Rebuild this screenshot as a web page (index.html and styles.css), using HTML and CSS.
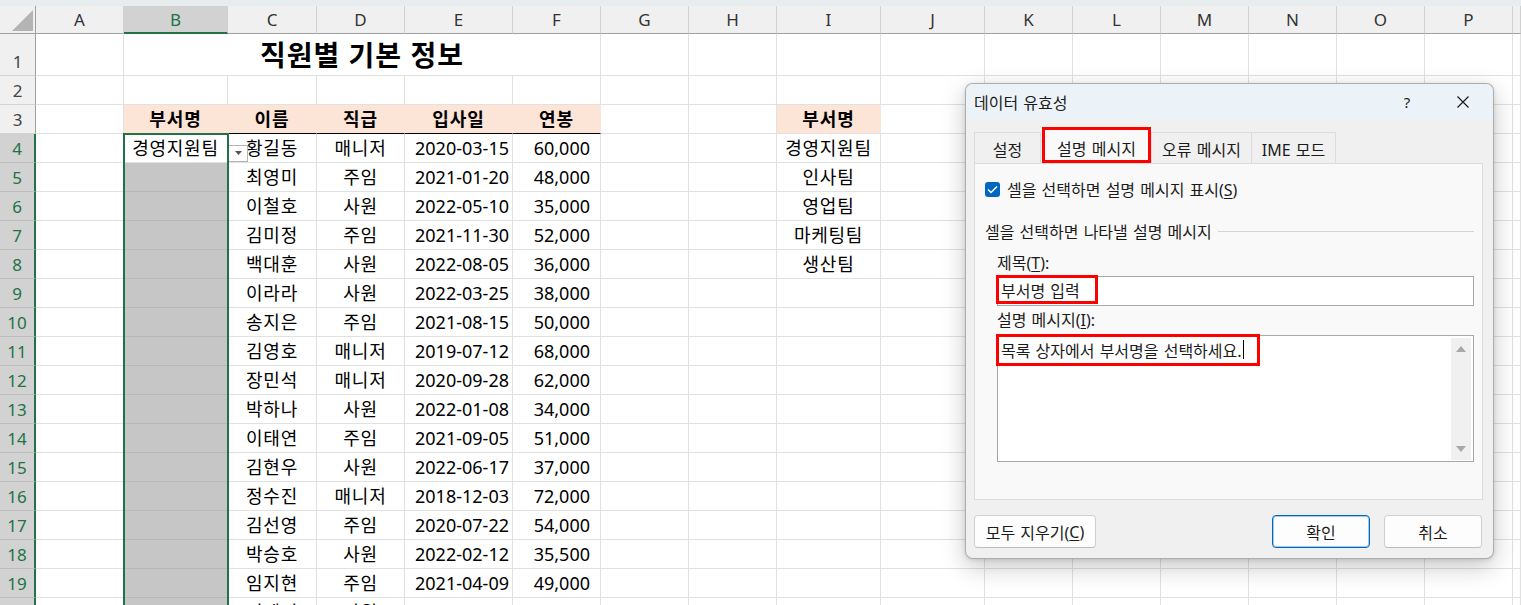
FILE: index.html
```html
<!DOCTYPE html>
<html lang="ko">
<head>
<meta charset="utf-8">
<title>데이터 유효성</title>
<link rel="stylesheet" href="styles.css">
</head>
<body>
<div class="app">
  <div class="strip"></div>
  <div class="sheet">
    <div class="r hd"><div class="corner"><svg width="21" height="21" viewBox="0 0 21 21"><path d="M21 0V21H0Z" fill="#b4b4b4"/></svg></div><div>A</div><div class="on">B</div><div>C</div><div>D</div><div>E</div><div>F</div><div>G</div><div>H</div><div>I</div><div>J</div><div>K</div><div>L</div><div>M</div><div>N</div><div>O</div><div>P</div><div></div></div>
    <div class="r r1"><div class="h">1</div><div></div><div class="title">직원별 기본 정보</div><div></div><div></div><div></div><div></div><div></div><div></div><div></div><div></div><div></div><div></div><div></div></div>
    <div class="r"><div class="h">2</div><div></div><div></div><div></div><div></div><div></div><div></div><div></div><div></div><div></div><div></div><div></div><div></div><div></div><div></div><div></div><div></div><div></div></div>
    <div class="r"><div class="h">3</div><div></div><div class="pk">부서명</div><div class="pk bb">이름</div><div class="pk bb">직급</div><div class="pk bb">입사일</div><div class="pk bb">연봉</div><div></div><div></div><div class="pk">부서명</div><div></div><div></div><div></div><div></div><div></div><div></div><div></div><div></div></div>
    <div class="r"><div class="h s">4</div><div></div><div class="act">경영지원팀</div><div>황길동</div><div>매니저</div><div class="rt">2020-03-15</div><div class="num">60,000</div><div></div><div></div><div>경영지원팀</div><div></div><div></div><div></div><div></div><div></div><div></div><div></div><div></div></div>
    <div class="r"><div class="h s">5</div><div></div><div class="sel"></div><div>최영미</div><div>주임</div><div class="rt">2021-01-20</div><div class="num">48,000</div><div></div><div></div><div>인사팀</div><div></div><div></div><div></div><div></div><div></div><div></div><div></div><div></div></div>
    <div class="r"><div class="h s">6</div><div></div><div class="sel"></div><div>이철호</div><div>사원</div><div class="rt">2022-05-10</div><div class="num">35,000</div><div></div><div></div><div>영업팀</div><div></div><div></div><div></div><div></div><div></div><div></div><div></div><div></div></div>
    <div class="r"><div class="h s">7</div><div></div><div class="sel"></div><div>김미정</div><div>주임</div><div class="rt">2021-11-30</div><div class="num">52,000</div><div></div><div></div><div>마케팅팀</div><div></div><div></div><div></div><div></div><div></div><div></div><div></div><div></div></div>
    <div class="r"><div class="h s">8</div><div></div><div class="sel"></div><div>백대훈</div><div>사원</div><div class="rt">2022-08-05</div><div class="num">36,000</div><div></div><div></div><div>생산팀</div><div></div><div></div><div></div><div></div><div></div><div></div><div></div><div></div></div>
    <div class="r"><div class="h s">9</div><div></div><div class="sel"></div><div>이라라</div><div>사원</div><div class="rt">2022-03-25</div><div class="num">38,000</div><div></div><div></div><div></div><div></div><div></div><div></div><div></div><div></div><div></div><div></div><div></div></div>
    <div class="r"><div class="h s">10</div><div></div><div class="sel"></div><div>송지은</div><div>주임</div><div class="rt">2021-08-15</div><div class="num">50,000</div><div></div><div></div><div></div><div></div><div></div><div></div><div></div><div></div><div></div><div></div><div></div></div>
    <div class="r"><div class="h s">11</div><div></div><div class="sel"></div><div>김영호</div><div>매니저</div><div class="rt">2019-07-12</div><div class="num">68,000</div><div></div><div></div><div></div><div></div><div></div><div></div><div></div><div></div><div></div><div></div><div></div></div>
    <div class="r"><div class="h s">12</div><div></div><div class="sel"></div><div>장민석</div><div>매니저</div><div class="rt">2020-09-28</div><div class="num">62,000</div><div></div><div></div><div></div><div></div><div></div><div></div><div></div><div></div><div></div><div></div><div></div></div>
    <div class="r"><div class="h s">13</div><div></div><div class="sel"></div><div>박하나</div><div>사원</div><div class="rt">2022-01-08</div><div class="num">34,000</div><div></div><div></div><div></div><div></div><div></div><div></div><div></div><div></div><div></div><div></div><div></div></div>
    <div class="r"><div class="h s">14</div><div></div><div class="sel"></div><div>이태연</div><div>주임</div><div class="rt">2021-09-05</div><div class="num">51,000</div><div></div><div></div><div></div><div></div><div></div><div></div><div></div><div></div><div></div><div></div><div></div></div>
    <div class="r"><div class="h s">15</div><div></div><div class="sel"></div><div>김현우</div><div>사원</div><div class="rt">2022-06-17</div><div class="num">37,000</div><div></div><div></div><div></div><div></div><div></div><div></div><div></div><div></div><div></div><div></div><div></div></div>
    <div class="r"><div class="h s">16</div><div></div><div class="sel"></div><div>정수진</div><div>매니저</div><div class="rt">2018-12-03</div><div class="num">72,000</div><div></div><div></div><div></div><div></div><div></div><div></div><div></div><div></div><div></div><div></div><div></div></div>
    <div class="r"><div class="h s">17</div><div></div><div class="sel"></div><div>김선영</div><div>주임</div><div class="rt">2020-07-22</div><div class="num">54,000</div><div></div><div></div><div></div><div></div><div></div><div></div><div></div><div></div><div></div><div></div><div></div></div>
    <div class="r"><div class="h s">18</div><div></div><div class="sel"></div><div>박승호</div><div>사원</div><div class="rt">2022-02-12</div><div class="num">35,500</div><div></div><div></div><div></div><div></div><div></div><div></div><div></div><div></div><div></div><div></div><div></div></div>
    <div class="r"><div class="h s">19</div><div></div><div class="sel"></div><div>임지현</div><div>주임</div><div class="rt">2021-04-09</div><div class="num">49,000</div><div></div><div></div><div></div><div></div><div></div><div></div><div></div><div></div><div></div><div></div><div></div></div>
    <div class="r"><div class="h s">20</div><div></div><div class="sel"></div><div>이세진</div><div>사원</div><div class="rt">2022-07-19</div><div class="num">36,500</div><div></div><div></div><div></div><div></div><div></div><div></div><div></div><div></div><div></div><div></div><div></div></div>
  </div>

  <div class="selbox"></div>
  <div class="dd"><svg width="7" height="4" viewBox="0 0 7 4"><path d="M0 0H7L3.5 4Z" fill="#555"/></svg></div>

  <div class="dlg">
    <div class="dlg-title">
      <span class="t">데이터 유효성</span>
      <span class="q">?</span>
      <span class="x"><svg width="12" height="12" viewBox="0 0 12 12"><path d="M0.5 0.5L11.5 11.5M11.5 0.5L0.5 11.5" stroke="#1b1b1b" stroke-width="1.2" fill="none"/></svg></span>
    </div>
    <div class="dlg-body">
      <div class="tabs">
        <div class="tab t1">설정</div>
        <div class="tab on">설명 메시지</div>
        <div class="tab t3">오류 메시지</div>
        <div class="tab t4">IME 모드</div>
      </div>
      <div class="panel">
        <div class="chk"><span class="box"><svg width="11" height="9" viewBox="0 0 11 9"><path d="M1 4.5L4 7.5L10 1.5" stroke="#fff" stroke-width="1.5" fill="none"/></svg></span><span>셀을 선택하면 설명 메시지 표시(<u>S</u>)</span></div>
        <div class="grp"><span>셀을 선택하면 나타낼 설명 메시지</span><i class="rule"></i></div>
        <div class="fld">
          <div class="lbl">제목(<u>T</u>):</div>
          <div class="inp"><span class="hl hl1">부서명 입력</span></div>
          <div class="lbl lbl2">설명 메시지(<u>I</u>):</div>
          <div class="ta">
            <span class="hl hl2">목록 상자에서 부서명을 선택하세요.<b class="caret"></b></span>
            <div class="sb">
              <svg width="10" height="6" viewBox="0 0 10 6"><path d="M5 0L10 6H0Z" fill="#a8a8a8"/></svg>
              <svg width="10" height="6" viewBox="0 0 10 6"><path d="M0 0H10L5 6Z" fill="#a8a8a8"/></svg>
            </div>
          </div>
        </div>
      </div>
      <div class="btns">
        <div class="btn clr">모두 지우기(<u>C</u>)</div>
        <div class="btn ok">확인</div>
        <div class="btn cancel">취소</div>
      </div>
    </div>
  </div>
</div>
</body>
</html>
```
FILE: styles.css
```css
:root {
  --cols: 36px 88px 104px 89px 88px 108px 88px 88px 88px 104px 104px 88px 88px 88px 88px 88px 88px 8px;
  --grid: #e1e1e1;
  --green: #217346;
}

body {
  margin: 0;
  background: #fff;
  font-family: "Noto Sans", "Noto Sans CJK KR", sans-serif;
}

.app {
  position: relative;
  width: 1521px;
  height: 605px;
  overflow: hidden;
}

.strip {
  height: 6px;
  background: #e7ecef;
}

.r {
  display: grid;
  grid-template-columns: var(--cols);
  height: 29px;
}

.r > div {
  box-sizing: border-box;
  border-right: 1px solid var(--grid);
  border-bottom: 1px solid var(--grid);
  display: flex;
  align-items: center;
  justify-content: center;
  font-size: 18px;
  letter-spacing: 0.7px;
  line-height: 1;
  white-space: nowrap;
  color: #000;
  min-width: 0;
}

.r.hd { height: 28px; }

.r.hd > div {
  background: #f0f0f0;
  border-right-color: #d0d0d0;
  border-bottom-color: #a0a0a0;
  font-size: 17px;
  letter-spacing: 0;
  color: #333;
}

.r.hd > .on {
  background: #d2d2d2;
  color: var(--green);
  border-bottom: 2px solid var(--green);
}

.r.hd > .corner {
  justify-content: flex-end;
  align-items: flex-end;
  padding: 0 2px 2px 0;
  border-right-color: #a0a0a0;
}

.r > .h {
  background: #f0f0f0;
  border-right-color: #a0a0a0;
  border-bottom-color: #d4d4d4;
  font-size: 17px;
  letter-spacing: 0;
  color: #444;
  align-items: flex-end;
  padding-bottom: 5px;
}

.r > .h.s {
  background: #d2d2d2;
  color: var(--green);
  border-right: 2px solid var(--green);
  border-bottom-color: #bdbdbd;
}

.r1 { height: 42px; }

.r > .title {
  grid-column: span 5;
  font-size: 28px;
  letter-spacing: 1px;
  font-weight: 700;
}

.r > .pk {
  background: #fce4d6;
  border-right-color: #fce4d6;
  font-weight: 700;
  letter-spacing: 1px;
}

.r > .bb { border-bottom-color: #000; }

.r > .sel {
  background: #c6c6c6;
  border-bottom-color: #b9b9b9;
  border-right-color: #c6c6c6;
}

.r > .rt {
  justify-content: flex-end;
  padding-right: 3px;
  letter-spacing: 0;
}

.r > .num {
  justify-content: flex-end;
  padding-right: 10px;
  letter-spacing: 0;
}

/* selection outline over column B */
.selbox {
  position: absolute;
  left: 123px;
  top: 133px;
  width: 106px;
  height: 500px;
  box-sizing: border-box;
  border: 2px solid var(--green);
  pointer-events: none;
}

/* data validation dropdown arrow button */
.dd {
  position: absolute;
  left: 229px;
  top: 145px;
  width: 19px;
  height: 17px;
  box-sizing: border-box;
  background: #fff;
  border: 1px solid #b5b5b5;
  border-left: none;
  display: flex;
  justify-content: center;
  align-items: flex-start;
  padding-top: 5px;
}

/* dialog */
.dlg {
  position: absolute;
  left: 965px;
  top: 83px;
  width: 529px;
  height: 476px;
  box-sizing: border-box;
  border: 1px solid rgba(0, 0, 0, 0.28);
  border-radius: 8px;
  background: #f0f0f0;
  box-shadow: 0 8px 24px rgba(0, 0, 0, 0.22), 0 1px 4px rgba(0, 0, 0, 0.12);
  overflow: hidden;
  font-family: "Noto Sans", "Noto Sans CJK KR", sans-serif;
  font-size: 16px;
  word-spacing: 1px;
  color: #1b1b1b;
  display: flex;
  flex-direction: column;
}

.dlg u { text-underline-offset: 2px; }

.dlg-title {
  height: 36px;
  flex: none;
  background: #ebf3f8;
  display: flex;
  align-items: center;
  padding-left: 8px;
}

.dlg-title .t { flex: 1; }

.dlg-title .q {
  width: 20px;
  text-align: center;
  margin-right: 36px;
  font-size: 15px;
}

.dlg-title .x {
  width: 20px;
  margin-right: 20px;
  display: flex;
  justify-content: center;
}

.dlg-body {
  flex: 1;
  padding: 7px 10px 0 8px;
  display: flex;
  flex-direction: column;
}

.tabs {
  display: flex;
  align-items: flex-end;
  height: 36px;
}

.tab {
  height: 31px;
  box-sizing: border-box;
  border: 1px solid #dcdcdc;
  border-bottom: none;
  background: #f0f0f0;
  display: flex;
  align-items: center;
  justify-content: center;
  padding-top: 2px;
}

.tab.t1 { width: 67px; }
.tab.t3 { width: 101px; }
.tab.t4 { width: 84px; border-left: none; }

.tab.on {
  width: 109px;
  height: 36px;
  margin-left: 1px;
  border: 3px solid #ff0000;
  background: #f9f9f9;
  padding-top: 6px;
}

.panel {
  height: 337px;
  box-sizing: border-box;
  border: 1px solid #dcdcdc;
  background: #f9f9f9;
  padding: 15px 8px 0 10px;
}

.chk {
  display: flex;
  align-items: center;
  height: 20px;
  gap: 7px;
}

.chk .box {
  width: 15px;
  height: 15px;
  border-radius: 3px;
  background: #0067c0;
  display: flex;
  align-items: center;
  justify-content: center;
}

.grp {
  display: flex;
  align-items: center;
  height: 20px;
  margin-top: 22px;
  gap: 6px;
}

.grp .rule {
  flex: 1;
  border-top: 1px solid #d5d5d5;
}

.fld { margin-left: 12px; }

.lbl {
  height: 20px;
  line-height: 20px;
  margin-top: 12px;
}

.lbl2 { margin-top: 4px; }

.inp {
  margin-top: 3px;
  height: 30px;
  box-sizing: border-box;
  border: 1px solid #a8a8a8;
  background: #fff;
  position: relative;
}

.hl {
  position: absolute;
  left: -2px;
  top: -2px;
  box-sizing: border-box;
  border: 3px solid #ff0000;
  display: flex;
  align-items: center;
  padding-left: 2px;
  white-space: nowrap;
}

.hl1 {
  width: 102px;
  height: 29px;
}

.hl2 {
  width: 264px;
  height: 32px;
  padding-bottom: 1px;
}

.caret {
  display: inline-block;
  width: 1px;
  height: 19px;
  background: #000;
  margin-left: 1px;
}

.ta {
  margin-top: 5px;
  height: 127px;
  box-sizing: border-box;
  border: 1px solid #a8a8a8;
  background: #fff;
  position: relative;
  display: flex;
  justify-content: flex-end;
  padding: 2px 2px 1px 0;
}

.sb {
  width: 20px;
  background: #f0f0f0;
  display: flex;
  flex-direction: column;
  justify-content: space-between;
  align-items: center;
  padding: 8px 0 8px;
  box-sizing: border-box;
}

.btns {
  display: flex;
  margin-top: 15px;
  height: 33px;
}

.btn {
  box-sizing: border-box;
  height: 33px;
  background: #fdfdfd;
  border: 1px solid #d0d0d0;
  border-bottom-color: #bdbdbd;
  border-radius: 4px;
  display: flex;
  align-items: center;
  justify-content: center;
}

.btn.clr { width: 122px; }

.btn.ok {
  width: 98px;
  margin-left: auto;
  border: 1px solid #0067c0;
  box-shadow: inset 0 0 0 1px rgba(0, 103, 192, 0.35);
}

.btn.cancel {
  width: 98px;
  margin-left: 14px;
  margin-right: 1px;
}
```
